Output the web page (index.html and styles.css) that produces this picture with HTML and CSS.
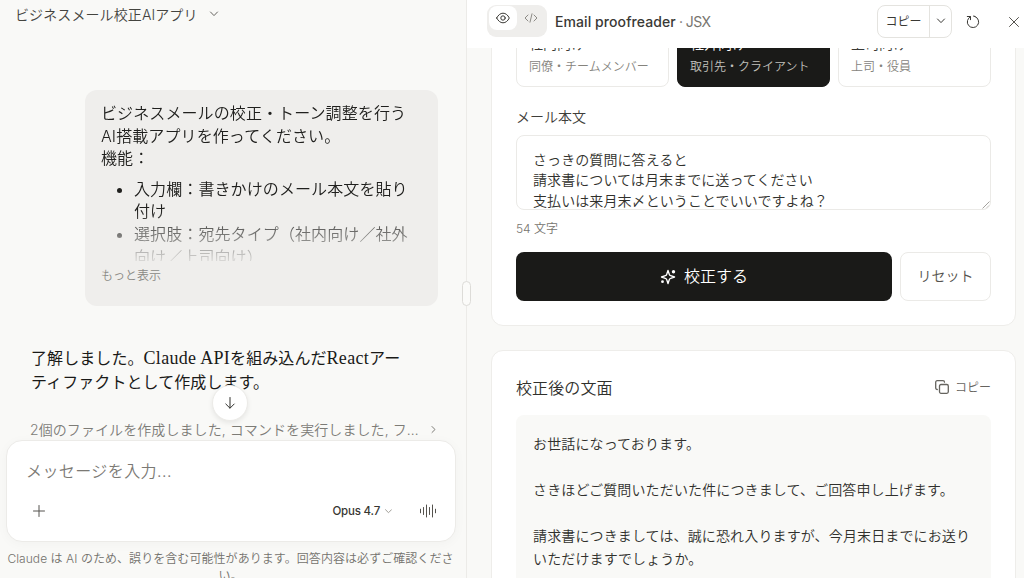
FILE: index.html
```html
<!DOCTYPE html>
<html lang="ja">
<head>
<meta charset="utf-8">
<title>ビジネスメール校正AIアプリ</title>
<link rel="stylesheet" href="styles.css">
</head>
<body>
<div class="app">
  <section class="chat">
    <header class="chat-header">
      <span class="chat-title">ビジネスメール校正AIアプリ</span>
      <svg class="title-chevron" width="10" height="6" viewBox="0 0 10 6"><path d="M1.500 1L5 4.600 8.500 1"/></svg>
    </header>
    <div class="bubble">
      <div class="bubble-text">
        <p>ビジネスメールの校正・トーン調整を行う<br>AI搭載アプリを作ってください。<br>機能：</p>
        <ul>
          <li>入力欄：書きかけのメール本文を貼り<br>付け</li>
          <li>選択肢：宛先タイプ（社内向け／社外<br>向け／上司向け）</li>
        </ul>
      </div>
      <span class="more">もっと表示</span>
    </div>
    <p class="reply">了解しました。<span class="latin">Claude API</span>を組み込んだ<span class="latin">React</span>アー<br>ティファクトとして作成します。</p>
    <div class="steps">
      <span class="steps-text">2個のファイルを作成しました, コマンドを実行しました, フ…</span>
      <svg width="6" height="9" viewBox="0 0 6 9"><path d="M1 1.500l3 3-3 3"/></svg>
    </div>
    <button class="scroll-down" aria-label="下へ">
      <svg width="12" height="14" viewBox="0 0 12 14"><path d="M6 1.500v10.500M1.800 8L6 12.200 10.200 8"/></svg>
    </button>
    <div class="composer">
      <div class="placeholder">メッセージを入力...</div>
      <div class="tools">
        <svg class="plus" width="12" height="12" viewBox="0 0 12 12"><path d="M6 .5v11M.5 6h11"/></svg>
        <span class="model">Opus 4.7</span>
        <svg class="model-chevron" width="7" height="5" viewBox="0 0 7 5"><path d="M.5.7l3 3 3-3"/></svg>
        <svg class="voice" width="18" height="14" viewBox="0 0 18 14"><path d="M1.500 5.200v3.600M4.500 3.500v7M7.500 1v12M10.500 3.500v7M13.500 1v12M16.500 5.200v3.600"/></svg>
      </div>
    </div>
    <p class="disclaimer">Claude は AI のため、誤りを含む可能性があります。回答内容は必ずご確認くださ<br>い。</p>
  </section>

  <section class="artifact">
    <span class="resize-handle"></span>
    <header class="bar">
      <div class="toggle">
        <span class="toggle-on"><svg width="14" height="12" viewBox="0 0 14 12"><path d="M.7 6C2.200 3 4.400 1.200 7 1.200S11.800 3 13.300 6C11.800 9 9.600 10.800 7 10.800S2.200 9 .7 6z"/><circle cx="7" cy="6" r="2.200"/></svg></span>
        <span class="toggle-off"><svg width="14" height="10" viewBox="0 0 14 10"><path d="M4 2L1 5l3 3M10 2l3 3-3 3M8 .8L6 9.200"/></svg></span>
      </div>
      <div class="bar-title"><span class="name">Email proofreader</span><span class="kind"> · JSX</span></div>
      <div class="copy-group">
        <span class="copy-main">コピー</span>
        <span class="copy-menu"><svg width="10" height="6" viewBox="0 0 10 6"><path d="M1.500 1L5 4.600 8.500 1"/></svg></span>
      </div>
      <svg class="reload" width="14" height="14" viewBox="0 0 14 14"><path d="M1.300 1.500h3.200v3.200M9 1.500A5.700 5.700 0 1 1 4.500 1.700M9 1.500l-1.500-.4"/></svg>
      <svg class="close" width="12" height="12" viewBox="0 0 12 12"><path d="M1.500 1.500l9 9M10.500 1.500l-9 9"/></svg>
    </header>
    <div class="scroller">
      <div class="card card-form">
        <div class="options">
          <div class="option"><b>社内向け</b><span>同僚・チームメンバー</span></div>
          <div class="option selected"><b>社外向け</b><span>取引先・クライアント</span></div>
          <div class="option"><b>上司向け</b><span>上司・役員</span></div>
        </div>
        <div class="label">メール本文</div>
        <div class="field">さっきの質問に答えると<br>請求書については月末までに送ってください<br>支払いは来月末〆ということでいいですよね？
          <svg class="grip" width="8" height="8" viewBox="0 0 8 8"><path d="M.8 7.200L7.200.8M4.500 7.200L7.200 4.500"/></svg>
        </div>
        <div class="count">54 文字</div>
        <div class="actions">
          <button class="primary">
            <svg width="16" height="16" viewBox="0 0 16 16"><path d="M8 1.500l1.300 3.900c.2.700.6 1.100 1.300 1.300L14.500 8l-3.900 1.300c-.7.2-1.100.6-1.300 1.300L8 14.500l-1.300-3.900c-.2-.7-.6-1.100-1.300-1.300L1.500 8l3.900-1.300c.7-.2 1.100-.6 1.300-1.300z"/><circle class="dot" cx="13.500" cy="2.800" r="1.700"/><circle class="dot" cx="2.500" cy="12.700" r="1.400"/></svg>
            <span>校正する</span>
          </button>
          <button class="reset"><span>リセット</span></button>
        </div>
      </div>
      <div class="card card-result">
        <div class="result-head">
          <h2>校正後の文面</h2>
          <span class="result-copy"><svg width="14" height="14" viewBox="0 0 14 14"><rect x="4.500" y="4.500" width="8.800" height="8.800" rx="1.500"/><path d="M2.300 9.500C1.300 9.500.7 8.900.7 8V2.200C.7 1.300 1.300.7 2.200.7H8c.9 0 1.500.6 1.500 1.500"/></svg>コピー</span>
        </div>
        <div class="result">お世話になっております。<br><br>さきほどご質問いただいた件につきまして、ご回答申し上げます。<br><br>請求書につきましては、誠に恐れ入りますが、今月末日までにお送り<br>いただけますでしょうか。</div>
      </div>
    </div>
  </section>
</div>
</body>
</html>
```
FILE: styles.css
```css
* { box-sizing: border-box; }
body {
  margin: 0;
  font-family: Inter, "Noto Sans CJK JP", sans-serif;
  font-weight: 350;
  color: #20201e;
  background: #f9f9f7;
}
p, ul, h2 { margin: 0; }
svg { display: block; flex: none; fill: none; stroke: currentColor; stroke-linecap: round; stroke-linejoin: round; }
button { font: inherit; margin: 0; padding: 0; }
.app { display: grid; grid-template-columns: 466px 1fr; height: 578px; overflow: hidden; white-space: nowrap; }

.chat { position: relative; display: flex; flex-direction: column; height: 578px; overflow: hidden; }
.chat-header { display: flex; align-items: center; gap: 11px; height: 29px; padding: 0 0 2px 15px; flex: none; font-size: 14px; letter-spacing: .1px; color: #44443f; }
.title-chevron { color: #66645f; }
.bubble { width: 353px; height: 216px; margin: 61px 0 0 85px; padding: 12px 16px; border-radius: 12px; background: #efeeec; flex: none; }
.bubble-text {
  height: 159px;
  overflow: hidden;
  font-size: 16px;
  line-height: 22.600px;
  letter-spacing: .1px;
  -webkit-mask-image: linear-gradient(#000 68%, transparent 104%);
  mask-image: linear-gradient(#000 68%, transparent 104%);
}
.bubble-text ul { margin-top: 8px; padding-left: 33px; }
.more { display: block; margin-top: 6px; font-size: 12px; line-height: 18px; color: #8a8984; }
.reply { margin: 41px 0 0 31px; font-family: "Liberation Serif", "Noto Sans CJK JP", serif; font-size: 16px; line-height: 24px; font-weight: 400; letter-spacing: .08px; color: #1a1a18; }
.latin { font-size: 18px; line-height: 1; letter-spacing: .3px; }
.steps { display: flex; align-items: center; gap: 12px; margin: 24px 0 0 30px; height: 23px; font-size: 14px; letter-spacing: .08px; color: #7d7c77; }
.scroll-down { position: absolute; left: 212px; top: 385px; width: 36px; height: 36px; border: 1px solid #ecebe8; border-radius: 50%; background: #fff; box-shadow: 0 2px 5px rgba(0,0,0,.08); display: grid; place-items: center; color: #30302d; }
.composer { position: relative; width: 450px; height: 102px; margin: 1px 0 0 6px; border: 1px solid #ecebe8; border-radius: 16px; background: #fff; box-shadow: 0 2px 12px rgba(0,0,0,.03); flex: none; }
.placeholder { padding: 18px 0 0 19px; font-size: 16px; line-height: 24px; letter-spacing: .42px; color: #7b7974; }
.tools { display: flex; align-items: center; height: 24px; margin-top: 16px; padding: 0 18px 0 26px; color: #55534e; }
.model { margin-left: auto; font-size: 11.500px; font-weight: 500; letter-spacing: -.2px; color: #383733; }
.model-chevron { margin-left: 5px; color: #a09e98; }
.voice { margin-left: 27px; }
.disclaimer { margin-top: 8px; width: 461px; text-align: center; font-size: 12px; line-height: 17px; letter-spacing: .06px; color: #73716c; }

.artifact { position: relative; height: 578px; border-left: 1px solid #ecebe8; display: flex; flex-direction: column; min-width: 0; }
.resize-handle { position: absolute; left: -5px; top: 281px; width: 9px; height: 25px; border: 1px solid #dddcd8; border-radius: 5px; background: #fbfbf9; z-index: 2; }
.bar { display: flex; align-items: center; height: 48px; padding: 0 4px 5px 20px; background: #fff; flex: none; color: #3a3935; }
.toggle { display: flex; width: 60px; height: 32px; margin-top: -1px; padding: 1px 2px; border-radius: 9px; background: #efeeec; }
.toggle span { display: grid; place-items: center; width: 28px; height: 24px; }
.toggle .toggle-on { background: #fff; border-radius: 8px; }
.toggle .toggle-off { color: #8d8b86; }
.bar-title { margin-left: 8px; font-size: 14px; }
.name { font-weight: 450; letter-spacing: .08px; }
.kind { color: #77756f; font-weight: 400; white-space: pre; letter-spacing: -.6px; }
.copy-group { display: flex; margin-left: auto; width: 75px; height: 33px; margin-top: -1px; border: 1px solid #e4e3df; border-radius: 8px; font-size: 12px; font-weight: 400; }
.copy-main { display: grid; place-items: center; width: 52px; padding-bottom: 1px; border-right: 1px solid #e4e3df; }
.copy-menu { display: grid; place-items: center; flex: 1; }
.reload { margin-left: 14px; }
.close { margin-left: 28px; color: #55534e; }
.scroller { flex: 1; min-height: 0; overflow: hidden; padding: 0 8px 0 24px; background: #f9f9f7; }
.card { border: 1px solid #eeedea; border-radius: 12px; background: #fff; padding: 24px; }
.card-form { margin-top: -52px; height: 330px; }
.options { display: grid; grid-template-columns: 1fr 1fr 1fr; gap: 8px; }
.option { display: flex; flex-direction: column; height: 66px; padding: 12px 12px 8px; border: 1px solid #ebeae7; border-radius: 8px; font-size: 12px; line-height: 18px; color: #85837d; }
.option b { font-size: 14px; line-height: 20px; font-weight: 350; color: #3a3935; margin-bottom: 4px; }
.option.selected { background: #1a1a18; border-color: #1a1a18; color: #c1c0bb; }
.option.selected b { color: #fff; }
.label { margin-top: 20px; font-size: 14px; line-height: 20px; color: #3f3e3a; }
.field { position: relative; margin-top: 8px; height: 75px; padding: 14px 16px; border: 1px solid #ebeae7; border-radius: 8px; overflow: hidden; font-size: 14px; line-height: 20.300px; letter-spacing: .08px; color: #30302c; }
.grip { position: absolute; right: 0; bottom: 0; color: #8b8984; stroke-width: .8; }
.count { margin-top: 10px; font-size: 12px; line-height: 18px; color: #77756f; }
.actions { display: flex; gap: 8px; margin-top: 14px; height: 49px; }
.primary { display: flex; align-items: center; justify-content: center; gap: 8px; flex: 1; border: 0; border-radius: 8px; background: #1a1a18; color: #fff; font-size: 16px; }
.primary svg { stroke-width: 1.400; }
.dot { fill: currentColor; stroke: none; }
.primary span, .reset span { padding-bottom: 3px; }
.reset span { display: block; }
.reset { width: 91px; border: 1px solid #ebeae7; border-radius: 8px; background: #fff; font-size: 14px; color: #55534e; }
.card-result { margin-top: 24px; height: 301px; }
.result-head { display: flex; justify-content: space-between; align-items: center; height: 24px; padding-bottom: 1px; }
h2 { font-size: 16px; font-weight: 350; letter-spacing: .1px; color: #30302c; }
.result-copy { display: flex; align-items: center; gap: 6px; font-size: 12px; color: #66645f; }
.result-copy svg { stroke-width: 1.300; }
.result { height: 240px; margin-top: 16px; padding: 17px; border-radius: 8px; background: #f9f9f7; font-size: 14px; letter-spacing: .13px; line-height: 23.100px; color: #30302c; }
```
